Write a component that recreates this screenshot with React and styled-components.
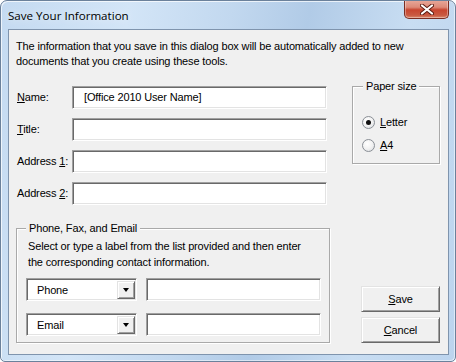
import React from "react";
import styled, { createGlobalStyle } from "styled-components";

const Global = createGlobalStyle`
  html, body { margin: 0; padding: 0; background: #fff; }
  * { box-sizing: border-box; }
`;

const dialogFont = `"Liberation Sans", Arial, sans-serif`;

const Window = styled.div`
  width: 456px;
  height: 362px;
  border: 1px solid #6b819b;
  border-radius: 7px 7px 5px 5px;
  background: linear-gradient(100deg, #c4daf1 0%, #d3e5f7 25%, #c2d8ef 45%, #b1cbe7 60%, #c8ddf2 80%, #bcd4ee 100%);
  box-shadow: inset 1px 1px 0 rgba(255,255,255,0.7), inset -1px -1px 0 rgba(255,255,255,0.5);
  display: flex;
  flex-direction: column;
  padding: 0 6px 6px 7px;
  overflow: hidden;
`;

const TitleBar = styled.div`
  height: 28px;
  display: flex;
  justify-content: space-between;
  align-items: flex-start;
  flex-shrink: 0;
`;

const TitleText = styled.div`
  font-family: "Open Sans", "Noto Sans", sans-serif;
  font-size: 11.6px;
  color: #000;
  line-height: 14px;
  margin-top: 8px;
  text-shadow: 0 0 8px rgba(255,255,255,0.9);
`;

const CloseButton = styled.div`
  width: 45px;
  height: 19px;
  margin-top: -1px;
  border: 1px solid #7a2d22;
  border-top: none;
  border-radius: 0 0 5px 5px;
  background: linear-gradient(to bottom, #e9a99b 0%, #dd8a78 40%, #c8452f 55%, #c95a42 85%, #db8a6e 100%);
  box-shadow: inset 0 0 0 1px rgba(255,255,255,0.35);
  display: flex;
  align-items: center;
  justify-content: center;
`;

const Client = styled.div`
  flex: 1;
  background: #f0f0f0;
  border: 1px solid #7f94ad;
  display: flex;
  flex-direction: column;
  padding: 9px 8px 0 7px;
  font-family: ${dialogFont};
  font-size: 11px;
  letter-spacing: -0.15px;
  color: #000;
`;

const Intro = styled.p`
  margin: 0;
  line-height: 15px;
  width: 420px;
`;

const Body = styled.div`
  display: flex;
  justify-content: space-between;
  margin-top: 17px;
`;

const LeftCol = styled.div`
  width: 314px;
  display: flex;
  flex-direction: column;
`;

const Fields = styled.div`
  display: flex;
  flex-direction: column;
  gap: 9px;
`;

const FieldRow = styled.div`
  display: flex;
  align-items: center;
  height: 23px;
`;

const Label = styled.label`
  width: 56px;
  padding-left: 1px;
  line-height: 15px;
  white-space: nowrap;
`;

const Key = styled.span`
  text-decoration: underline;
  text-underline-offset: 1px;
`;

const sunken = `
  border: 1px solid;
  border-color: #a0a0a0 #ffffff #ffffff #a0a0a0;
  box-shadow: inset 1px 1px 0 #696969, inset -1px -1px 0 #e3e3e3;
  background: #fff;
`;

const TextBox = styled.div`
  ${sunken}
  width: ${(p) => p.$w}px;
  height: 23px;
  padding-left: ${(p) => p.$pad || 4}px;
  display: flex;
  align-items: center;
  line-height: 15px;
`;

const Group = styled.fieldset`
  margin: 0;
  border: 1px solid #a9a9a9;
  box-shadow: inset 1px 1px 0 #fff, 1px 1px 0 #fff;
  padding: ${(p) => p.$pad};
  min-width: 0;
`;

const GroupTitle = styled.legend`
  padding: 0 3px;
  margin-left: ${(p) => p.$ml}px;
  line-height: 15px;
  background: #f0f0f0;
`;

const PhoneGroup = styled(Group)`
  margin-top: 16px;
`;

const GroupText = styled.p`
  margin: 0 0 0 2px;
  max-width: 285px;
  line-height: 16px;
`;

const ContactRows = styled.div`
  display: flex;
  flex-direction: column;
  gap: 12px;
  margin-top: 8px;
`;

const ContactRow = styled.div`
  display: flex;
  gap: 9px;
`;

const Combo = styled.div`
  ${sunken}
  width: 111px;
  height: 23px;
  display: flex;
  align-items: center;
  justify-content: space-between;
  padding: 2px 1px 2px 10px;
`;

const raised = `
  border: 1px solid;
  border-color: #e3e3e3 #696969 #696969 #e3e3e3;
  box-shadow: inset 1px 1px 0 #ffffff, inset -1px -1px 0 #a0a0a0;
  background: #f0f0f0;
`;

const DropButton = styled.div`
  ${raised}
  width: 18px;
  height: 18px;
  display: flex;
  align-items: center;
  justify-content: center;
`;

const Arrow = styled.div`
  width: 0;
  height: 0;
  border-left: 3.5px solid transparent;
  border-right: 3.5px solid transparent;
  border-top: 4px solid #000;
  margin-top: 1px;
`;

const RightCol = styled.div`
  width: 88px;
  display: flex;
  flex-direction: column;
  justify-content: space-between;
  align-items: flex-end;
`;

const PaperGroup = styled(Group)`
  width: 88px;
  margin-top: -7px;
`;

const RadioList = styled.div`
  display: flex;
  flex-direction: column;
  gap: 10px;
`;

const RadioRow = styled.div`
  display: flex;
  align-items: center;
  height: 13px;
  gap: 5px;
  line-height: 15px;
`;

const RadioCircle = styled.div`
  width: 13px;
  height: 13px;
  border-radius: 50%;
  border: 1px solid #8a8f96;
  background: radial-gradient(circle at 40% 35%, #ffffff 0%, #f2f2f2 50%, #d6d9dd 100%);
  display: flex;
  align-items: center;
  justify-content: center;
  &::after {
    content: "";
    width: 5px;
    height: 5px;
    border-radius: 50%;
    background: ${(p) => (p.$checked ? "#101010" : "transparent")};
  }
`;

const Buttons = styled.div`
  display: flex;
  flex-direction: column;
  gap: 5px;
`;

const PushButton = styled.div`
  ${raised}
  width: 79px;
  height: 26px;
  display: flex;
  align-items: center;
  justify-content: center;
  line-height: 15px;
`;

export default function App() {
  return (
    <>
      <Global />
      <Window>
        <TitleBar>
          <TitleText>Save Your Information</TitleText>
          <CloseButton>
            <svg width="14" height="11" viewBox="0 0 14 11">
              <path
                d="M2 1.5 L12 9.5 M12 1.5 L2 9.5"
                stroke="#5a1a10"
                strokeWidth="4"
                strokeLinecap="round"
              />
              <path
                d="M2 1.5 L12 9.5 M12 1.5 L2 9.5"
                stroke="#ffffff"
                strokeWidth="2.2"
                strokeLinecap="round"
              />
            </svg>
          </CloseButton>
        </TitleBar>
        <Client>
          <Intro>
            The information that you save in this dialog box will be automatically added to new
            documents that you create using these tools.
          </Intro>
          <Body>
            <LeftCol>
              <Fields>
                <FieldRow>
                  <Label><Key>N</Key>ame:</Label>
                  <TextBox $w={255} $pad={11}>[Office 2010 User Name]</TextBox>
                </FieldRow>
                <FieldRow>
                  <Label><Key>T</Key>itle:</Label>
                  <TextBox $w={255} />
                </FieldRow>
                <FieldRow>
                  <Label>Address <Key>1</Key>:</Label>
                  <TextBox $w={255} />
                </FieldRow>
                <FieldRow>
                  <Label>Address <Key>2</Key>:</Label>
                  <TextBox $w={255} />
                </FieldRow>
              </Fields>
              <PhoneGroup $pad="2px 8px 6px 9px">
                <GroupTitle $ml={0}>Phone, Fax, and Email</GroupTitle>
                <GroupText>
                  Select or type a label from the list provided and then enter the corresponding
                  contact information.
                </GroupText>
                <ContactRows>
                  <ContactRow>
                    <Combo>
                      <span>Phone</span>
                      <DropButton><Arrow /></DropButton>
                    </Combo>
                    <TextBox $w={175} />
                  </ContactRow>
                  <ContactRow>
                    <Combo>
                      <span>Email</span>
                      <DropButton><Arrow /></DropButton>
                    </Combo>
                    <TextBox $w={175} />
                  </ContactRow>
                </ContactRows>
              </PhoneGroup>
            </LeftCol>
            <RightCol>
              <PaperGroup $pad="22px 0 11px 9px">
                <GroupTitle $ml={1}>Paper size</GroupTitle>
                <RadioList>
                  <RadioRow>
                    <RadioCircle $checked />
                    <span><Key>L</Key>etter</span>
                  </RadioRow>
                  <RadioRow>
                    <RadioCircle />
                    <span><Key>A</Key>4</span>
                  </RadioRow>
                </RadioList>
              </PaperGroup>
              <Buttons>
                <PushButton><span><Key>S</Key>ave</span></PushButton>
                <PushButton><span><Key>C</Key>ancel</span></PushButton>
              </Buttons>
            </RightCol>
          </Body>
        </Client>
      </Window>
    </>
  );
}
